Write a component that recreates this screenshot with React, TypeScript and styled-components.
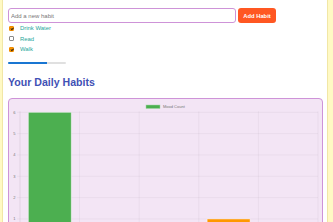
import { useState } from 'react'
import styled, { createGlobalStyle } from 'styled-components'

/* ───── global ───── */
const Global = createGlobalStyle`
  html, body { margin: 0; padding: 0; overflow: hidden; }
  body {
    background: #fff9c4;
    font-family: "Liberation Sans", Arial, sans-serif;
  }
`

/* ───── layout ───── */
const Page = styled.div`
  min-height: 100vh;
  padding: 0 5px 0 2px;
`

const Card = styled.main`
  background: #fff;
  border: 1px solid #f1e7a6;
  border-top: none;
  padding: 8px 4px 24px 5px;
  display: flex;
  flex-direction: column;
`

/* form ---------------------------------------------------------------- */
const FormLine = styled.form`
  display: flex;
  gap: 2px;
  height: 15px;
`

const Input = styled.input`
  width: 228px;
  box-sizing: border-box;
  height: 15px;
  padding: 0 2px;
  border: 1px solid #ce93d8;
  border-radius: 3px;
  font: 6px "Liberation Sans", Arial, sans-serif;
  color: #333;
  outline: none;
  &::placeholder { color: #777; }
`

const AddBtn = styled.button`
  width: 38px;
  height: 15px;
  padding: 0;
  border: none;
  border-radius: 3px;
  background: #ff5722;
  color: #fff;
  font: bold 5.8px "Liberation Sans", Arial, sans-serif;
`

/* habit list ---------------------------------------------------------- */
const List = styled.ul`
  list-style: none;
  margin: 0;
  padding: 0;
`

const Row = styled.li`
  display: flex;
  align-items: center;
  gap: 6px;
  height: 10.5px;
  padding-left: 1px;
  label { font-size: 5.9px; color: #26a69a; }
`

const Check = styled.input`
  appearance: none;
  position: relative;
  box-sizing: border-box;
  width: 5px;
  height: 5px;
  margin: 0;
  border: 0.6px solid #8a8a8a;
  border-radius: 1px;
  background: #fff;
  &:checked {
    background: #ff9800;
    border-color: #f08c00;
  }
  &:checked::after {
    content: '';
    position: absolute;
    left: 1.2px;
    top: 0.2px;
    width: 1.2px;
    height: 2.4px;
    border: solid #3a2a10;
    border-width: 0 0.6px 0.6px 0;
    transform: rotate(45deg);
  }
`

const Track = styled.div`
  width: 58px;
  height: 2px;
  margin-top: 7.5px;
  background: #e0e0e0;
  border-radius: 2px;
  overflow: hidden;
`

const Fill = styled.div`
  height: 100%;
  background: #1976d2;
`

const Heading = styled.h2`
  margin: 12px 0 0;
  font-size: 10.6px;
  line-height: 12.2px;
  font-weight: 700;
  color: #3f51b5;
`

/* chart --------------------------------------------------------------- */
const ChartBox = styled.div`
  margin-top: 9.5px;
  border: 1px solid #ce93d8;
  border-radius: 4px;
  background: #f3e5f5;
  height: 150px;
  svg { display: block; }
`

type Habit = { name: string; done: boolean }

const counts = [6, 0, 0, 1, 0]
const barColors = ['#4caf50', '#2196f3', '#9c27b0', '#ff9800', '#f44336']

const X0 = 11
const X1 = 309
const Y6 = 13.3
const STEP = 21.33

function MoodChart() {
  const colW = (X1 - X0) / counts.length
  const y = (v: number) => Y6 + (6 - v) * STEP
  return (
    <svg width={313} height={150} viewBox="0 0 313 150">
      {/* legend */}
      <rect x={137} y={6} width={14} height={3.5} fill="#4caf50" stroke="#a5d6a7" strokeWidth={0.5} />
      <text x={154} y={9.3} fontSize={4} fill="#777" fontFamily="Liberation Sans, Arial, sans-serif">Mood Count</text>

      {/* horizontal grid + ticks */}
      {[1, 2, 3, 4, 5, 6].map(v => (
        <g key={v}>
          <line x1={8} x2={X1} y1={y(v)} y2={y(v)} stroke="rgba(0,0,0,0.06)" strokeWidth={0.7} />
          <text x={6.5} y={y(v) + 1.4} fontSize={4} textAnchor="end" fill="#777"
            fontFamily="Liberation Sans, Arial, sans-serif">{v}</text>
        </g>
      ))}

      {/* vertical grid */}
      {Array.from({ length: counts.length + 1 }, (_, i) => (
        <line key={i} x1={X0 + i * colW} x2={X0 + i * colW} y1={Y6 - 1} y2={150}
          stroke={i === 0 ? 'rgba(0,0,0,0.1)' : 'rgba(0,0,0,0.06)'} strokeWidth={0.7} />
      ))}

      {/* bars */}
      {counts.map((c, i) => {
        if (!c) return null
        const w = colW * 0.72
        const cx = X0 + colW * (i + 0.5)
        return (
          <rect key={i} x={cx - w / 2} y={y(c)} width={w} height={y(0) - y(c)}
            fill={barColors[i]} stroke="rgba(255,255,255,0.55)" strokeWidth={0.8} />
        )
      })}
    </svg>
  )
}

export default function App() {
  const [habits, setHabits] = useState<Habit[]>([
    { name: 'Drink Water', done: true },
    { name: 'Read', done: false },
    { name: 'Walk', done: true },
  ])
  const [draft, setDraft] = useState('')

  const doneRatio = habits.filter(h => h.done).length / habits.length

  const toggle = (i: number) =>
    setHabits(hs => hs.map((h, j) => (j === i ? { ...h, done: !h.done } : h)))

  const add = (e: React.FormEvent) => {
    e.preventDefault()
    if (!draft.trim()) return
    setHabits(hs => [...hs, { name: draft.trim(), done: false }])
    setDraft('')
  }

  return (
    <Page>
      <Global />
      <Card>
        <FormLine onSubmit={add}>
          <Input placeholder="Add a new habit" value={draft} onChange={e => setDraft(e.target.value)} />
          <AddBtn type="submit">Add Habit</AddBtn>
        </FormLine>

        <List>
          {habits.map((h, i) => (
            <Row key={h.name + i}>
              <Check id={'h' + i} type="checkbox" checked={h.done} onChange={() => toggle(i)} />
              <label htmlFor={'h' + i}>{h.name}</label>
            </Row>
          ))}
        </List>

        <Track>
          <Fill style={{ width: `${doneRatio * 100}%` }} />
        </Track>

        <Heading>Your Daily Habits</Heading>

        <ChartBox>
          <MoodChart />
        </ChartBox>
      </Card>
    </Page>
  )
}
